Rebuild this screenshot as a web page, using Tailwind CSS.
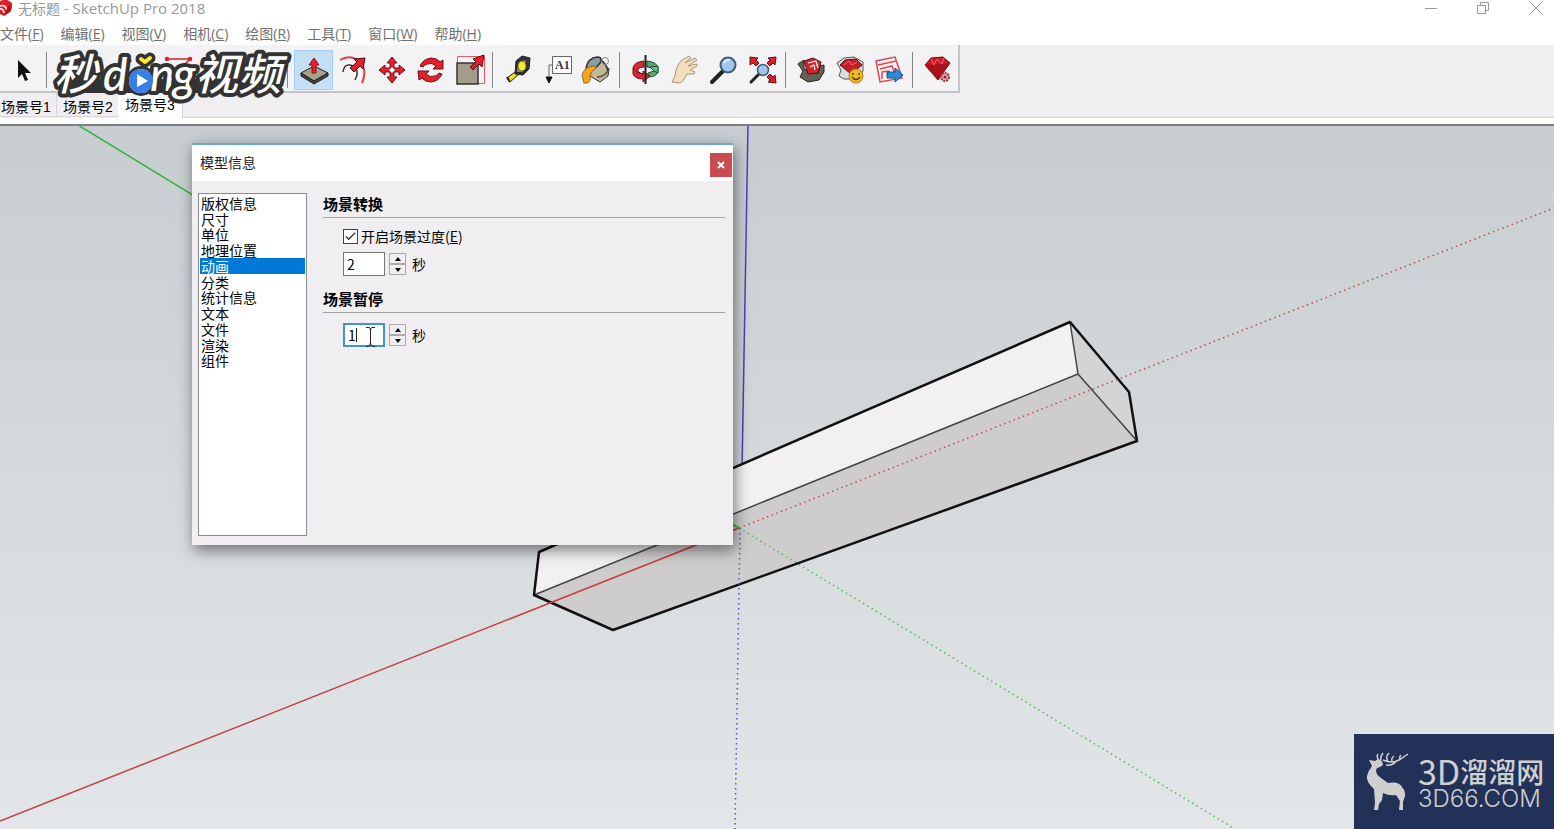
<!DOCTYPE html>
<html lang="zh-CN">
<head>
    <meta charset="UTF-8">
    <meta name="viewport" content="width=device-width, initial-scale=1.0">
    <title>无标题 - SketchUp Pro 2018</title>
    <script src="https://cdn.jsdelivr.net/npm/@tailwindcss/browser@4"></script>
    <style>
        body {
            font-family: 'Open Sans', 'Noto Sans CJK SC', sans-serif;
        }
    </style>
</head>
<body class="bg-[#f0eef0] text-sm text-black h-screen flex flex-col overflow-hidden">

    <!-- Title bar -->
    <header class="bg-white h-5 shrink-0 flex items-center justify-between text-[#999]">
        <div class="flex items-center gap-1.5 pb-1">
            <svg class="w-3 h-5" viewBox="0 0 12 20">
                <path d="M0 3 6 1 12 5 11 13 4 18 0 16Z" fill="#e11f26"/>
                <path d="M0 8q5-2 7 4M0 11q3-1 4 4" fill="none" stroke="#fff" stroke-width="1.6"/>
                <path d="M7 10 12 6 11 13 4 18Z" fill="#b3131a"/>
            </svg>
            <h1 class="leading-5 text-[15px]"><span class="text-sm">无标题</span> - SketchUp Pro 2018</h1>
        </div>
        <div class="flex items-center h-4 text-[#999] pb-1">
            <button class="w-[52px] flex justify-center" aria-label="最小化"><svg class="size-3.5" viewBox="0 0 14 14" fill="none" stroke="currentColor"><path d="M1 7.5H13"/></svg></button>
            <button class="w-[52px] flex justify-center" aria-label="还原"><svg class="size-3.5" viewBox="0 0 14 14" fill="none" stroke="currentColor"><path d="M1.500 4.500h8v8h-8zM4.500 4.500v-3h8v8h-3"/></svg></button>
            <button class="w-[45px] pl-2 flex justify-center" aria-label="关闭"><svg class="size-3.5" viewBox="0 0 14 14" fill="none" stroke="currentColor"><path d="M1 1 13 13M13 1 1 13"/></svg></button>
        </div>
    </header>

    <!-- Menu -->
    <nav class="bg-white h-[25px] shrink-0 flex items-center gap-[17px] text-[#707070] leading-6 pb-0.5 pt-1">
        <button>文件(<u>F</u>)</button>
        <button>编辑(<u>E</u>)</button>
        <button>视图(<u>V</u>)</button>
        <button>相机(<u>C</u>)</button>
        <button>绘图(<u>R</u>)</button>
        <button>工具(<u>T</u>)</button>
        <button>窗口(<u>W</u>)</button>
        <button>帮助(<u>H</u>)</button>
    </nav>

    <!-- Toolbar -->
    <div class="relative h-12 shrink-0 flex">
        <div class="flex items-center pt-1 pl-1 border-r-2 border-b-2 border-[#c6c4c6] bg-[#f3f2f4]">
            <button class="w-[39px] h-10 flex justify-center items-center" aria-label="选择">
                <svg class="size-8" viewBox="0 0 32 32"><path d="M10 6V24l4-4 3 7 3-1-3-7h6Z" fill="#111"/></svg>
            </button>
            <div class="w-2.5 pl-[3px]"><div class="w-px h-9 bg-[#888]"></div></div>
            <div class="w-[231px] h-10 flex items-center">
                <!-- Drawing tools -->
                <svg class="w-full h-10" viewBox="0 0 231 40" fill="none" stroke="#d3242c" stroke-width="1.5">
                    <path d="M7 25 14 12M68 15l8-7 2 3-8 8ZM114 9h23L127 19"/>
                    <circle cx="114" cy="9" r="1.500" fill="#d3242c"/><circle cx="137" cy="9" r="1.500" fill="#d3242c"/>
                </svg>
            </div>
            <div class="w-2.5 pl-[3px]"><div class="w-px h-9 bg-[#888]"></div></div>
            <button class="w-[39px] h-10 flex justify-center items-center bg-[#c3def5] border border-[#a5d0f5]" aria-label="推/拉">
                <svg class="size-8 shrink-0" viewBox="0 0 32 32" stroke="#222" stroke-linejoin="round">
                    <path d="M3 19 16 12 30 19 16 27Z" fill="#a7a28c"/><path d="M3 19 16 27 30 19V22L16 30 3 22Z" fill="#45433a"/>
                    <path d="M14 19V11H11L16 4l5 7H18v8Z" fill="#e3202b" stroke="#8d1017"/>
                </svg>
            </button>
            <button class="w-[39px] h-10 flex justify-center items-center" aria-label="跟随路径">
                <svg class="size-8" viewBox="0 0 32 32" fill="none">
                    <path d="M3 6Q13 0 22 7 31 15 25 29" stroke="#d84047" stroke-width="2"/><path d="M6 18Q7 10 13 11 24 14 18 26" stroke="#333" stroke-width="1.500"/>
                    <path d="M13 14 20 8 17 5 28 4 26 15 23 12 17 18Z" fill="#e3202b" stroke="#4b1013"/>
                </svg>
            </button>
            <button class="w-[39px] h-10 flex justify-center items-center" aria-label="移动">
                <svg class="size-8" viewBox="0 0 32 32" fill="#e3202b" stroke="#731017">
                    <path d="M16 3 21 9H18V14H14V9H11ZM16 29 11 23H14V18H18V23H21ZM3 16 9 11V14H14V18H9V21ZM29 16 23 21V18H18V14H23V11Z"/>
                    <path d="M16 13 19 16 16 19 13 16Z" fill="#fff" stroke="none"/>
                </svg>
            </button>
            <button class="w-[39px] h-10 flex justify-center items-center" aria-label="旋转">
                <svg class="size-8" viewBox="0 0 32 32" fill="#e3202b" stroke="#731017">
                    <path d="M5 12Q8 5 16 4 22 4 25 8L28 6V15H18L21 12Q17 8 12 10 9 11 8 13Z"/>
                    <path d="M27 20Q24 27 16 28 10 28 7 24L4 26 3 17H14L11 20Q15 24 20 22 23 21 24 19Z"/>
                </svg>
            </button>
            <button class="w-[39px] h-10 flex justify-center items-center" aria-label="缩放">
                <svg class="size-8" viewBox="0 0 32 32">
                    <path d="M3.500 2.500H30.500V29.500H3.500Z" fill="none" stroke="#e55a60"/>
                    <path d="M3 9H24V30H3Z" fill="#a19d88" stroke="#333" stroke-width="1.500"/>
                    <path d="M16 13 22 8 19 5 30 1 28 13 25 10 19 16Z" fill="#e3202b" stroke="#4b1013"/>
                </svg>
            </button>
            <div class="w-2.5 pl-[3px]"><div class="w-px h-9 bg-[#888]"></div></div>
            <button class="w-[39px] h-10 flex justify-center items-center" aria-label="卷尺">
                <svg class="size-8" viewBox="0 0 32 32" stroke="#222">
                    <path d="M4 24 12 18 16 20 7 28Z" fill="#f3df1e"/><path d="M4 23 7 28" stroke-width="2"/>
                    <path d="M13 7 19 2 27 4 26 15 20 21 12 20Z" fill="#333"/><path d="M15 8 23 5 24 14 19 19 13 18Z" fill="#888"/><ellipse cx="19" cy="12" rx="4" ry="5" fill="#f5ee28" stroke="#655f17"/>
                </svg>
            </button>
            <button class="w-[39px] h-10 flex justify-center items-center" aria-label="文字">
                <svg class="size-8" viewBox="0 0 32 32" fill="none" stroke="#666">
                    <path d="M10.500 2.500H29.500V19.500H10.500Z" fill="#fff"/><path d="M10 11H7V24"/><path d="M4 23H10L7 29Z" fill="#111" stroke="#111"/>
                    <text x="13" y="15" font-family="Liberation Serif" font-size="12" font-weight="700" fill="#333" stroke="none">A1</text>
                </svg>
            </button>
            <button class="w-[39px] h-10 flex justify-center items-center" aria-label="颜料桶">
                <svg class="size-8" viewBox="0 0 32 32" stroke="#333">
                    <path d="M6 12 17 3 28 15 27 22 19 28 9 22Z" fill="#c2b998"/>
                    <path d="M5 14Q7 4 16 3 21 3 20 7 18 13 9 16Z" fill="#899da2" stroke-width="1.500"/>
                    <path d="M19 5Q25 9 27 17" fill="none" stroke-width="1.500"/>
                    <circle cx="24" cy="7" r="3.500" fill="none" stroke="#888"/>
                    <path d="M16 23Q23 23 27 17" fill="none" stroke="#665f4b" stroke-width="2"/>
                    <path d="M12 12Q3 13 1 21L3 29H6Q10 28 9 22 10 17 15 14 16 12 12 12Z" fill="#f4a51c" stroke="#9a6818"/>
                </svg>
            </button>
            <div class="w-2.5 pl-[3px]"><div class="w-px h-9 bg-[#888]"></div></div>
            <button class="w-[39px] h-10 flex justify-center items-center" aria-label="环绕观察">
                <svg class="size-8" viewBox="0 0 32 32" stroke-linejoin="round">
                    <path d="M17 7Q27 8 28 14V18Q26 23 18 23V19L24 17Q22 13 17 13Z" fill="#54a873" stroke="#234d32"/>
                    <path d="M20 13 28 12V19L24 17Z" fill="#68bf87" stroke="#234d32"/>
                    <path d="M14 7Q4 8 3 14V20Q5 25 13 25V28L20 22 13 17V20Q7 19 8 15 10 13 14 13Z" fill="#d52b35" stroke="#701018"/>
                    <path d="M3 14Q6 19 13 20" fill="none" stroke="#701018"/>
                    <path d="M15.500 1V30" stroke="#222" stroke-width="2"/>
                </svg>
            </button>
            <button class="w-[39px] h-10 flex justify-center items-center" aria-label="平移">
                <svg class="size-8" viewBox="0 0 32 32"><path d="M3 28Q7 22 7 16 9 9 13 6L20 2 22 4 16 9 26 4 28 6 19 12 28 10 28 12 21 16 26 18 25 20 18 20Q14 28 11 29Z" fill="#f4dfbd" stroke="#aa9575" stroke-linejoin="round"/></svg>
            </button>
            <button class="w-[39px] h-10 flex justify-center items-center" aria-label="缩放视图">
                <svg class="size-8" viewBox="0 0 32 32"><path d="M4 28 15 17" stroke="#222" stroke-width="4" stroke-linecap="round"/><circle cx="20" cy="11" r="7.500" fill="#9fc6ed" stroke="#465b70" stroke-width="2"/><path d="M16 9Q18 5 22 6" fill="none" stroke="#d5e9fb" stroke-width="2"/></svg>
            </button>
            <button class="w-[39px] h-10 flex justify-center items-center" aria-label="缩放范围">
                <svg class="size-8" viewBox="0 0 32 32">
                    <path d="M4 28 12 20" stroke="#222" stroke-width="3" stroke-linecap="round"/><circle cx="16" cy="16" r="5.500" fill="#9fc6ed" stroke="#465b70" stroke-width="1.500"/>
                    <path d="M3 3 11 4 9 6 12 9 9 12 6 9 3 11ZM29 3 28 11 26 9 23 12 20 9 23 6 21 4ZM29 29 21 28 23 26 20 23 23 20 26 23 28 21Z" fill="#dc202b" stroke="#641017"/>
                </svg>
            </button>
            <div class="w-2.5 pl-[3px]"><div class="w-px h-9 bg-[#888]"></div></div>
            <button class="w-[39px] h-10 flex justify-center items-center" aria-label="3D 模型库">
                <svg class="size-8" viewBox="0 0 32 32" stroke-linejoin="round">
                    <path d="M2 10 8 6 8 15 22 20 24 12 28 11 28 18 23 26 12 28 4 23 7 17Z" fill="#656052" stroke="#26231f"/>
                    <path d="M8 7 17 4 25 8 22 19 12 20Z" fill="#d3232c" stroke="#501015"/><path d="M12 9 20 7 22 14M14 13 18 11 19 16" fill="none" stroke="#fff" stroke-width="1.200"/>
                </svg>
            </button>
            <button class="w-[39px] h-10 flex justify-center items-center" aria-label="扩展程序库">
                <svg class="size-8" viewBox="0 0 32 32" stroke-linejoin="round">
                    <path d="M2 9 9 4 19 3 28 8 28 17 23 25 9 25 4 22 6 16Z" fill="#ddd" stroke="#555"/>
                    <path d="M5 11 10 6 21 5 27 11 16 20Z" fill="#c61e28" stroke="#551218"/><path d="M9 11 14 7 17 11 22 8" fill="none" stroke="#ff6570"/>
                    <circle cx="21" cy="22" r="7" fill="#f2b921" stroke="#ae7a13"/><path d="M18 19V21M24 19V21M17 23Q21 28 25 23" fill="none" stroke="#533c12" stroke-width="1.500"/>
                </svg>
            </button>
            <button class="w-[39px] h-10 flex justify-center items-center" aria-label="LayOut">
                <svg class="size-8" viewBox="0 0 32 32" fill="none" stroke="#df4450" stroke-width="1.500">
                    <path d="M2 7 21 3 28 24 6 28Z" fill="#fff5f5"/><path d="M4 11 22 7M6 15 18 12 22 23M8 25V18L15 17 16 24"/>
                    <path d="M13 18H21V14L29 21 21 28V24H13Z" fill="#278be1" stroke="#174e80" stroke-width="1"/>
                </svg>
            </button>
            <div class="w-2.5 pl-[3px]"><div class="w-px h-9 bg-[#888]"></div></div>
            <button class="w-[39px] h-10 flex justify-center items-center" aria-label="扩展管理">
                <svg class="size-8" viewBox="0 0 32 32" stroke-linejoin="round">
                    <path d="M2 11 8 4 20 3 27 9 15 26Z" fill="#cf1924" stroke="#60131a"/><path d="M2 11 27 9 15 26Z" fill="#a9121c"/><path d="M8 5 11 11 14 5 19 10 21 4" fill="none" stroke="#f3646c"/>
                    <circle cx="22" cy="23" r="4" fill="#e7a6aa" stroke="#9c343c" stroke-width="2" stroke-dasharray="2 1"/><circle cx="22" cy="23" r="1.500" fill="#8d2730"/>
                </svg>
            </button>
        </div>

        <!-- Video watermark -->
        <svg class="absolute left-[50px] top-0 w-[245px] h-[68px] z-10 overflow-visible" viewBox="50 45 245 68" fill="#fff" stroke="#333" stroke-width="8" stroke-linejoin="round" paint-order="stroke" font-weight="500" font-style="italic" font-size="43" font-family="'Noto Sans CJK SC', sans-serif" role="img" aria-label="秒dong视频">
            <path d="M62 86H276" stroke-width="14"/>
            <circle cx="141" cy="81" r="12" stroke-width="6"/>
            <text x="54" y="90">秒</text>
            <text x="103" y="91" font-family="Lato" font-size="46">d</text>
            <text x="150" y="91" font-family="Lato" font-size="46">n</text>
            <text x="173" y="91" font-family="Lato" font-size="46">g</text>
            <text x="195" y="90">视频</text>
            <circle cx="141" cy="81" r="12" fill="#397fe8" stroke="none"/>
            <path d="M137 74 148 81 137 87Z" stroke="none"/>
            <path d="M141 59 145 62 150 58" fill="none" stroke-width="11" stroke-linecap="round"/>
            <path d="M141 59 145 62 150 58" fill="none" stroke="#ffe928" stroke-width="4" stroke-linecap="round"/>
        </svg>
    </div>

    <!-- Scene tabs -->
    <div class="h-[31px] shrink-0 border-b-6 border-white bg-[#f0eef0] font-['Liberation_Sans','Noto_Sans_CJK_SC'] leading-5">
        <div class="h-[25px] flex items-start">
            <button class="w-[57px] h-6 pl-px pt-1 text-left border-r border-b border-[#d8d6d8] whitespace-nowrap">场景号1</button>
            <button class="w-[61px] h-6 pl-1.5 pt-1 text-left border-b border-[#d8d6d8] whitespace-nowrap">场景号2</button>
            <button class="w-[65px] h-[25px] pl-[7px] pb-0.5 text-left bg-white border-r border-[#d8d6d8] whitespace-nowrap">场景号3</button>
            <div class="flex-1 h-[25px] border-b border-[#d8d6d8]"></div>
        </div>
    </div>

    <!-- Model view -->
    <main class="relative flex-1 min-h-0 border-t-2 border-[#7d8083] bg-linear-to-b from-[#c7cdd0] to-[#e2e6e9]">
        <svg class="absolute inset-0 w-full h-full" viewBox="0 126 1554 703" preserveAspectRatio="xMinYMin slice" fill="none">
            <path d="M78 125 739 528" stroke="#35b13b" stroke-width="1.500"/>
            <path d="M748 125 741 528" stroke="#4543bd" stroke-width="1.500"/>
            <g stroke-linejoin="round">
                <path d="M539 552 1070 322 1078 374 534 595Z" fill="#f2f0f3"/>
                <path d="M534 595 1078 374 1137 441 613 630Z" fill="#cfccce"/>
                <path d="M1070 322 1129 392 1137 441 1078 374Z" fill="#d3d4d5"/>
                <path d="M534 595 1078 374 1137 441M1070 322 1078 374" stroke="#444" stroke-width="1.500"/>
                <path d="M1070 322 1129 392 1137 441 613 630 534 595 539 552Z" stroke="#111" stroke-width="2.500"/>
            </g>
            <path d="M0 821 739 528" stroke="#c73e43" stroke-width="1.500"/>
            <path d="M730 523 739 528" stroke="#35b13b" stroke-width="2"/>
            <path d="M739 528 1554 208" stroke="#c04a51" stroke-width="1.500" stroke-dasharray="1.500 3.500"/>
            <path d="M739 528 1235 829" stroke="#52b957" stroke-width="1.500" stroke-dasharray="1.500 3.500"/>
            <path d="M740 528 735 829" stroke="#5454c4" stroke-width="1.500" stroke-dasharray="1.500 3.500"/>
        </svg>

        <!-- Model info window -->
        <section class="absolute left-[192px] top-[17px] w-[541px] h-[402px] flex flex-col bg-[#f0eef0] border-t-2 border-[#68a9d5] shadow-[2px_5px_14px_rgba(0,0,0,0.5)] font-['Noto_Sans_CJK_SC']">
            <div class="h-9 shrink-0 bg-white flex items-center justify-between pl-2 pr-px">
                <h2 class="text-[#222] pb-0.5">模型信息</h2>
                <button class="w-[22px] h-6 mt-1 bg-[#c84c50] text-white flex items-center justify-center" aria-label="关闭">
                    <svg class="size-2" viewBox="0 0 8 8" stroke="currentColor" stroke-width="2"><path d="M1 1 7 7M7 1 1 7"/></svg>
                </button>
            </div>
            <div class="flex-1 flex pt-3 pb-[9px] pl-1.5 pr-2">
                <div class="w-[109px] bg-white border border-[#888c94] px-px pt-px">
                    <ul class="grid grid-rows-11 h-[173px] leading-4">
                        <li class="flex"><button class="flex-1 text-left pl-px">版权信息</button></li>
                        <li class="flex"><button class="flex-1 text-left pl-px">尺寸</button></li>
                        <li class="flex"><button class="flex-1 text-left pl-px">单位</button></li>
                        <li class="flex"><button class="flex-1 text-left pl-px">地理位置</button></li>
                        <li class="flex"><button class="flex-1 text-left pl-px bg-[#0078d7] text-white">动画</button></li>
                        <li class="flex"><button class="flex-1 text-left pl-px">分类</button></li>
                        <li class="flex"><button class="flex-1 text-left pl-px">统计信息</button></li>
                        <li class="flex"><button class="flex-1 text-left pl-px">文本</button></li>
                        <li class="flex"><button class="flex-1 text-left pl-px">文件</button></li>
                        <li class="flex"><button class="flex-1 text-left pl-px">渲染</button></li>
                        <li class="flex"><button class="flex-1 text-left pl-px">组件</button></li>
                    </ul>
                </div>
                <form class="flex-1 pl-4">
                    <h3 class="h-[25px] border-b border-[#a6a4a6] text-[15px] leading-[22px] font-bold">场景转换</h3>
                    <div class="pl-5 pt-2">
                        <label class="flex items-center gap-[3px] h-5 whitespace-nowrap">
                            <input type="checkbox" checked class="appearance-none size-[15px] bg-white border border-[#444] checked:bg-[url('data:image/svg+xml,%3Csvg%20xmlns=%22http://www.w3.org/2000/svg%22%20viewBox=%220%200%2014%2014%22%3E%3Cpath%20d=%22M2%207l3%203%207-7%22%20fill=%22none%22%20stroke=%22%23333%22%20stroke-width=%221.3%22/%3E%3C/svg%3E')]">
                            <span>开启场景过度(<u>E</u>)</span>
                        </label>
                        <div class="flex items-center gap-1 mt-1.5 h-6">
                            <input id="transition" type="text" value="2" class="w-[42px] h-6 px-[3px] bg-white border border-[#777]">
                            <div class="w-[17px] flex flex-col">
                                <button type="button" class="h-[11px] border border-[#aaa] flex justify-center items-center" aria-label="增加"><svg class="w-2 h-1" viewBox="0 0 8 4"><path d="M1 4 4 0 7 4Z"/></svg></button>
                                <button type="button" class="h-[11px] border border-[#aaa] flex justify-center items-center" aria-label="减少"><svg class="w-2 h-1" viewBox="0 0 8 4"><path d="M1 0H7L4 4Z"/></svg></button>
                            </div>
                            <label for="transition" class="pl-0.5">秒</label>
                        </div>
                    </div>
                    <h3 class="mt-3 h-[25px] border-b border-[#a6a4a6] text-[15px] leading-[22px] font-bold">场景暂停</h3>
                    <div class="relative flex items-center gap-1 pl-5 mt-2.5 h-6">
                        <input id="delay" type="text" value="1" class="w-[42px] h-6 px-[3px] bg-white border-2 border-[#3f93d6]">
                        <div class="w-[17px] flex flex-col">
                            <button type="button" class="h-[11px] border border-[#aaa] flex justify-center items-center" aria-label="增加"><svg class="w-2 h-1" viewBox="0 0 8 4"><path d="M1 4 4 0 7 4Z"/></svg></button>
                            <button type="button" class="h-[11px] border border-[#aaa] flex justify-center items-center" aria-label="减少"><svg class="w-2 h-1" viewBox="0 0 8 4"><path d="M1 0H7L4 4Z"/></svg></button>
                        </div>
                        <label for="delay" class="pl-0.5">秒</label>
                        <!-- Caret and mouse pointer -->
                        <svg class="absolute left-8 top-0.5 w-6 h-6" viewBox="0 0 24 24" fill="none" stroke="#222"><path d="M1.500 3V17M11 2.500H14Q15.500 2.500 15.500 5V18Q15.500 21.500 12 21.500H11M20 2.500H17Q15.500 2.500 15.500 5M15.500 18Q15.500 21.500 19 21.500H20"/></svg>
                    </div>
                </form>
            </div>
        </section>

        <!-- Site badge -->
        <aside class="absolute right-0 bottom-0 w-[200px] h-[95px] bg-[#223157] text-[#cfcfcf] flex items-center pl-3 gap-[9px]">
            <svg class="w-[43px] h-[60px] shrink-0" viewBox="0 0 43 60" fill="#cfcfcf">
                <path d="M3 8 9 9 12 7 16 9 17 13 14 15 11 16Q8 21 15 26L22 31Q33 29 36 35 40 39 39 44L37 50 37 58H33L34 49 30 43Q23 44 17 41L16 48 13 52 12 58H8L9 51 8 37Q0 30 1 24 2 19 6 14Z"/>
                <path d="M13 8Q10 5 12 2M15 8Q14 5 17 1M17 8Q26 12 33 8L42 2M22 9Q19 5 23 1M26 9Q25 6 28 4M30 9Q27 14 20 13M34 7Q33 5 35 3" fill="none" stroke="#cfcfcf" stroke-width="1.500"/>
            </svg>
            <div class="whitespace-nowrap pt-0.5">
                <div class="flex items-center h-8 leading-8 text-[28px] font-['Noto_Sans_CJK_SC'] font-medium"><span class="text-[34px] font-normal">3D</span>溜溜网</div>
                <div class="text-2xl leading-6 font-light font-['Inter']">3D66.COM</div>
            </div>
        </aside>
    </main>
</body>
</html>
